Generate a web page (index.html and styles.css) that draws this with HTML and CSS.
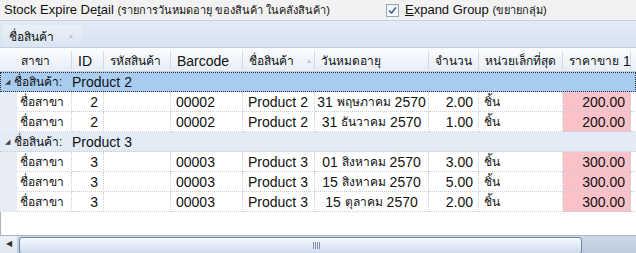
FILE: index.html
```html
<!DOCTYPE html>
<html lang="th">
<head>
  <meta charset="UTF-8">
  <title>Stock Expire Detail</title>
  <link rel="stylesheet" href="styles.css">
</head>
<body>

  <!-- title bar -->
  <div class="topbar">
    <span class="title">Stock Expire De<u>t</u>ail <small>(รายการวันหมดอายุ ของสินค้า ในคลังสินค้า)</small></span>
    <label class="expand">
      <span class="check">
        <svg width="9" height="9" viewBox="0 0 9 9"><path d="M1 4.5 L3.5 7 L8 1.5" fill="none" stroke="#3b63a8" stroke-width="1.6"/></svg>
      </span>
      <span><u>E</u>xpand Group <small>(ขยายกลุ่ม)</small></span>
    </label>
  </div>

  <!-- group by panel -->
  <div class="group-panel">
    <span class="chip">ชื่อสินค้า <i class="sort">▲</i></span>
  </div>

  <div class="grid">
    <div class="row head">
      <div class="hc span2">สาขา</div>
      <div class="hc en">ID</div>
      <div class="hc">รหัสสินค้า</div>
      <div class="hc en">Barcode</div>
      <div class="hc">ชื่อสินค้า <i class="sort">▲</i></div>
      <div class="hc">วันหมดอายุ</div>
      <div class="hc">จำนวน</div>
      <div class="hc">หน่วยเล็กที่สุด</div>
      <div class="hc">ราคาขาย <b class="en">1</b></div>
      <div class="hc last"></div>
    </div>
    <div id="body"></div>
    <div class="empty"></div>
  </div>

  <!-- horizontal scrollbar -->
  <div class="hscroll">
    <div class="arrow">◀</div>
    <div class="thumb"><div class="grip"></div></div>
  </div>

  <script>
    const groups = [
      { name: 'Product 2', focus: true, rows: [
        ['ชื่อสาขา', 2, '', '00002', 'Product 2', '31|พฤษภาคม|2570', '2.00', 'ชิ้น', '200.00'],
        ['ชื่อสาขา', 2, '', '00002', 'Product 2', '31|ธันวาคม|2570', '1.00', 'ชิ้น', '200.00']
      ]},
      { name: 'Product 3', rows: [
        ['ชื่อสาขา', 3, '', '00003', 'Product 3', '01|สิงหาคม|2570', '3.00', 'ชิ้น', '300.00'],
        ['ชื่อสาขา', 3, '', '00003', 'Product 3', '15|สิงหาคม|2570', '5.00', 'ชิ้น', '300.00'],
        ['ชื่อสาขา', 3, '', '00003', 'Product 3', '15|ตุลาคม|2570', '2.00', 'ชิ้น', '300.00']
      ]}
    ];
    const align = ['th', 'right', '', '', '', 'center', 'right', 'th', 'right price'];
    const body = document.getElementById('body');

    // วันที่: ตัวเลข + เดือน (ตัวอักษรไทยเล็กลง)
    function dateHtml(s) {
      const [d, m, y] = s.split('|');
      return `${d} <span class="th">${m}</span> ${y}`;
    }

    groups.forEach(g => {
      const gr = document.createElement('div');
      gr.className = 'group' + (g.focus ? ' focus' : '');
      gr.innerHTML = `<span class="tri">◢</span><span class="gl">ชื่อสินค้า:</span>${g.name}`;
      body.appendChild(gr);
      g.rows.forEach(r => {
        const row = document.createElement('div');
        row.className = 'row data';
        row.innerHTML = '<div class="indent"></div>' +
          r.map((v, i) => `<div class="c ${align[i]}">${i === 5 ? dateHtml(v) : v}</div>`).join('') +
          '<div class="c last"></div>';
        body.appendChild(row);
      });
    });
  </script>
</body>
</html>
```

FILE: styles.css
```css
:root {
  --cols: 17px 55px 32px 67px 72px 72px 114px 50px 84px 68px 1fr;
  --line: #c9ced6;
  --font: 'Liberation Sans', 'Noto Sans', sans-serif;
}
* { box-sizing: border-box; margin: 0; padding: 0; }
body {
  width: 636px;
  height: 253px;
  overflow: hidden;
  font-family: var(--font);
  font-size: 13px;
  color: #111;
  background: #fff;
}
small { font-size: 11px; }
.sort { font-style: normal; font-size: 6px; color: #b5bfcc; margin-left: 12px; vertical-align: 2px; }

/* top bar */
.topbar {
  height: 21px;
  background: #f2f2f2;
  border-bottom: 1px solid #c7d0dc;
  display: flex;
  align-items: center;
  padding-left: 4px;
  white-space: nowrap;
}
.title { width: 382px; font-size: 13px; }
.expand { display: flex; align-items: center; gap: 6px; font-size: 13px; }
.check {
  width: 13px; height: 13px;
  border: 1px solid #97a5b8;
  background: linear-gradient(#eef1f5, #fff);
  display: flex; align-items: center; justify-content: center;
}

/* group panel */
.group-panel {
  height: 27px;
  background: linear-gradient(#e3ebf6, #d8e3f1);
  border-bottom: 1px solid #c2cede;
  padding: 4px 0 0 3px;
}
.chip {
  display: inline-flex;
  align-items: center;
  height: 22px;
  width: 78px;
  padding-left: 6px;
  font-size: 12px;
  background: linear-gradient(#e9f0f8, #dbe5f1);
  border-radius: 2px;
}
.chip .sort { margin-left: 14px; }

/* grid */
.row {
  display: grid;
  grid-template-columns: var(--cols);
}
.head {
  height: 24px;
  background: linear-gradient(#fbfcfe, #e8eef7);
  border-bottom: 1px solid #c6d0dd;
}
.hc {
  display: flex;
  align-items: center;
  padding-left: 6px;
  font-size: 12px;
  border-right: 1px solid #d3dae4;
  margin: 3px 0;
  white-space: nowrap;
}
.hc.span2 { grid-column: span 2; justify-content: center; padding-left: 0; }
.hc.en, .hc .en { font-size: 14px; font-weight: normal; }
.hc .en { margin-left: 4px; }
.hc.last { border-right: none; }

.group {
  height: 20px;
  display: flex;
  align-items: center;
  font-size: 14px;
  background: #e3ebf6;
  border-bottom: 1px dotted var(--line);
  white-space: pre;
}
.group.focus {
  background: #a9cdf0;
  outline: 1px dotted #333;
  outline-offset: -1px;
}
.group .tri { font-size: 7px; color: #444; width: 14px; padding-left: 5px; }
.group .gl { font-size: 12px; width: 58px; }

.data { height: 20px; }
.indent { background: #e8edf5; }
.c {
  display: flex;
  align-items: center;
  padding: 0 5px;
  font-size: 14px;
  border-right: 1px dotted var(--line);
  border-bottom: 1px dotted var(--line);
  white-space: pre;
  overflow: hidden;
}
.c.th, .c .th { font-size: 12px; }
.c.th:nth-child(2) { padding-left: 3px; }
.c.right { justify-content: flex-end; }
.c.center { justify-content: center; }
.c.price { background: #f9c1c8; }
.c.last { border-right: none; }

.empty { height: 23px; border-left: 1px solid #a9b4c2; }

/* scrollbar */
.hscroll {
  height: 18px;
  display: flex;
  align-items: flex-start;
  background: linear-gradient(#cdd8e6, #bccadc);
  border-top: 1px solid #a9b8cc;
}
.arrow {
  flex: none;
  width: 17px;
  height: 17px;
  line-height: 16px;
  font-size: 8px;
  color: #333;
  text-align: center;
  background: linear-gradient(#eef2f8, #dce5f0);
}
.thumb {
  flex: none;
  width: 563px;
  height: 17px;
  margin: 1px 0 0 2px;
  border: 1px solid #6f86a6;
  border-radius: 3px;
  background: linear-gradient(#f6f9fc, #cfdcec);
  display: flex;
  align-items: center;
  justify-content: center;
}
.grip {
  width: 7px;
  height: 7px;
  margin-left: 32px;
  background: repeating-linear-gradient(90deg, #7d90ab 0 1px, transparent 1px 2px);
}
```
